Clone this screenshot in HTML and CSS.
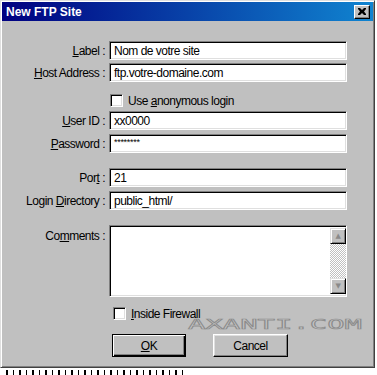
FILE: index.html
```html
<!DOCTYPE html>
<html lang="fr">

<head>
    <meta charset="UTF-8">
    <title>New FTP Site</title>
    <link rel="stylesheet" href="styles.css">
</head>

<body>
    <div class="window">
        <div class="titlebar">
            <span class="title">New FTP Site</span>
            <span class="close">
                <svg width="8" height="7" viewBox="0 0 8 7"><path d="M0 0h2l2 2 2-2h2v1L6 3.5 8 6v1H6L4 5 2 7H0V6l2-2.5L0 1z" fill="#000"/></svg>
            </span>
        </div>
        <div class="content">
            <div class="row first">
                <span class="lbl"><u>L</u>abel :</span>
                <span class="field">Nom de votre site</span>
            </div>
            <div class="row tight">
                <span class="lbl"><u>H</u>ost Address :</span>
                <span class="field">ftp.votre-domaine.com</span>
            </div>
            <div class="check anon">
                <span class="box"></span>
                <span>Use <u>a</u>nonymous login</span>
            </div>
            <div class="row near">
                <span class="lbl"><u>U</u>ser ID :</span>
                <span class="field">xx0000</span>
            </div>
            <div class="row near">
                <span class="lbl"><u>P</u>assword :</span>
                <span class="field pass">********</span>
            </div>
            <div class="row group">
                <span class="lbl">Por<u>t</u> :</span>
                <span class="field">21</span>
            </div>
            <div class="row near">
                <span class="lbl">Login <u>D</u>irectory :</span>
                <span class="field">public_html/</span>
            </div>
            <div class="row group comments">
                <span class="lbl">Co<u>m</u>ments :</span>
                <span class="field memo">
                    <span class="scroll">
                        <span class="sbtn">&#9650;</span>
                        <span class="track"></span>
                        <span class="sbtn">&#9660;</span>
                    </span>
                </span>
            </div>
            <div class="check firewall">
                <span class="box"></span>
                <span><u>I</u>nside Firewall</span>
            </div>
            <div class="buttons">
                <span class="btn default"><u>O</u>K</span>
                <span class="btn">Cancel</span>
            </div>
            <div class="mark">AXANTI.COM</div>
        </div>
    </div>
    <div class="behind"></div>
</body>

</html>
```

FILE: styles.css
```css
* {
    margin: 0;
    padding: 0;
    box-sizing: border-box;
}

body {
    background: #fff;
    font-family: "Liberation Sans", Arial, sans-serif;
    font-size: 12px;
    letter-spacing: -0.5px;
    color: #000;
    overflow: hidden;
}

.window {
    width: 375px;
    height: 368px;
    background: #c0c0c0;
    border: 1px solid;
    border-color: #dfdfdf #404040 #404040 #dfdfdf;
    box-shadow: inset 1px 1px #fff, inset -1px -1px #808080;
    padding: 1px;
    display: flex;
    flex-direction: column;
}

.titlebar {
    height: 19px;
    background: linear-gradient(90deg, #000080, #1084d0);
    display: flex;
    align-items: center;
    justify-content: space-between;
    padding: 0 3px 0 4px;
}

.title {
    color: #fff;
    font: bold 12px "Liberation Sans", sans-serif;
    letter-spacing: 0;
}

.close {
    width: 16px;
    height: 14px;
    background: #c0c0c0;
    border: 1px solid;
    border-color: #fff #000 #000 #fff;
    box-shadow: inset -1px -1px #808080;
    display: flex;
    align-items: center;
    justify-content: center;
}

.content {
    position: relative;
    flex: 1;
}

.row {
    display: flex;
    align-items: center;
    height: 19px;
    margin-top: 4px;
}

.row.first {
    margin-top: 20px;
}

.row.tight {
    margin-top: 3px;
}

.row.group {
    margin-top: 15px;
}

.lbl {
    width: 103px;
    text-align: right;
    white-space: nowrap;
}

.field {
    margin-left: 4px;
    width: 238px;
    height: 19px;
    background: #fff;
    border: 1px solid;
    border-color: #808080 #fff #fff #808080;
    box-shadow: inset 1px 1px #000, inset -1px -1px #dfdfdf;
    padding: 2px 0 0 4px;
    white-space: nowrap;
}

.field.pass {
    font-size: 9px;
    letter-spacing: -0.3px;
}

.row.comments {
    height: 72px;
    align-items: flex-start;
}

.comments .lbl {
    padding-top: 4px;
}

.field.memo {
    height: 72px;
    padding: 2px 0 2px 0;
    display: flex;
    justify-content: flex-end;
}

.scroll {
    width: 16px;
    display: flex;
    flex-direction: column;
}

.sbtn {
    height: 16px;
    background: #c0c0c0;
    border: 1px solid;
    border-color: #dfdfdf #000 #000 #dfdfdf;
    box-shadow: inset 1px 1px #fff, inset -1px -1px #808080;
    color: #8a8a8a;
    font: 7px "DejaVu Sans", sans-serif;
    text-align: center;
    line-height: 14px;
}

.track {
    flex: 1;
    background: repeating-conic-gradient(#c0c0c0 0 25%, #fff 0 50%) 0 0 / 2px 2px;
}

.check {
    display: flex;
    align-items: center;
    height: 13px;
    gap: 5px;
}

.check.anon {
    margin: 12px 0 0 108px;
}

.check.firewall {
    margin: 10px 0 0 111px;
}

.box {
    width: 13px;
    height: 13px;
    background: #fff;
    border: 1px solid;
    border-color: #808080 #fff #fff #808080;
    box-shadow: inset 1px 1px #000, inset -1px -1px #dfdfdf;
}

.buttons {
    display: flex;
    gap: 27px;
    margin: 14px 0 0 110px;
}

.btn {
    width: 75px;
    height: 23px;
    background: #c0c0c0;
    border: 1px solid;
    border-color: #fff #000 #000 #fff;
    box-shadow: inset -1px -1px #808080, inset 1px 1px #dfdfdf;
    display: flex;
    align-items: center;
    justify-content: center;
}

.btn.default {
    width: 74px;
    border: 1px solid #000;
    box-shadow: inset 1px 1px #fff, inset -1px -1px #000, inset -2px -2px #808080;
}

.mark {
    position: absolute;
    left: 186px;
    top: 294px;
    font: 17px "DejaVu Sans Mono", monospace;
    letter-spacing: 0;
    color: #c4c4c4;
    -webkit-text-stroke: 0.8px #8c8c8c;
    transform: scale(1.7, 0.85);
    transform-origin: left top;
}

.behind {
    height: 5px;
    margin: 2px 0 0 6px;
    width: 180px;
    background: repeating-linear-gradient(90deg, #000 0 2px, transparent 2px 7px, #000 7px 8px, transparent 8px 13px);
}
```
